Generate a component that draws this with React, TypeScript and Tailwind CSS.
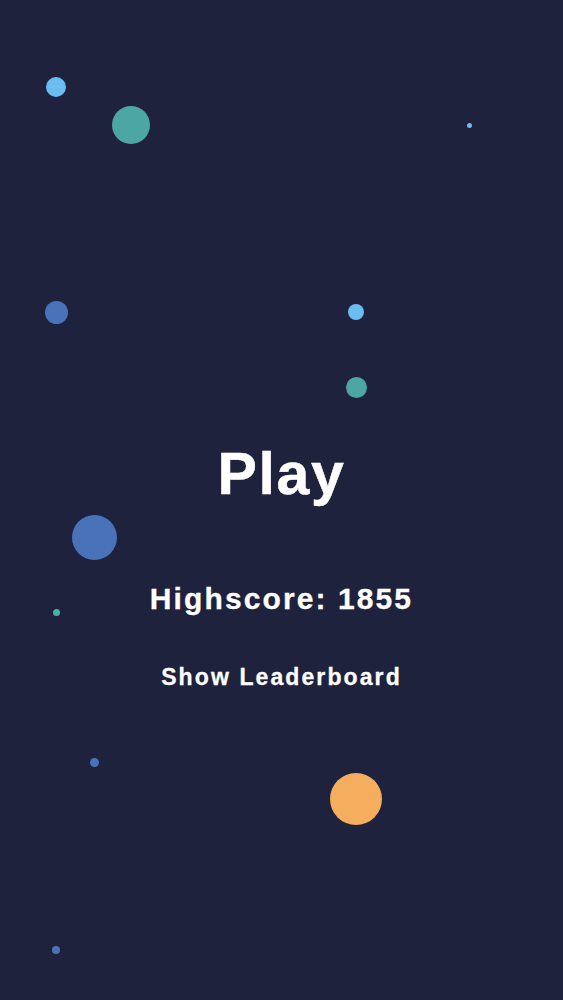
const BUBBLES = [
  { x: 56, y: 87, d: 20, color: "bg-[#6bbcf0]" },
  { x: 131, y: 125, d: 38, color: "bg-[#4ba6a4]" },
  { x: 469, y: 125, d: 5, color: "bg-[#6bbcf0]" },
  { x: 56, y: 312, d: 23, color: "bg-[#4a72b8]" },
  { x: 356, y: 312, d: 16, color: "bg-[#6bbcf0]" },
  { x: 356, y: 387, d: 21, color: "bg-[#4ba6a4]" },
  { x: 94, y: 537, d: 45, color: "bg-[#4a72b8]" },
  { x: 56, y: 612, d: 7, color: "bg-[#4ab3a0]" },
  { x: 94, y: 762, d: 9, color: "bg-[#4a72b8]" },
  { x: 356, y: 799, d: 52, color: "bg-[#f5ae5e]" },
  { x: 56, y: 950, d: 8, color: "bg-[#4a72b8]" },
];

export default function App() {
  return (
    <div className="relative h-[1000px] w-full overflow-hidden bg-[#1f223d] font-['Liberation_Sans',Arial,sans-serif] text-white">
      {BUBBLES.map((b, i) => (
        <span
          key={i}
          className={`absolute rounded-full ${b.color}`}
          style={{ left: b.x - b.d / 2, top: b.y - b.d / 2, width: b.d, height: b.d }}
        />
      ))}
      <div className="relative flex flex-col items-center pt-[445px]">
        <button type="button" className="text-[59px] font-bold leading-none tracking-[1.6px] [-webkit-text-stroke:0.5px_white]">
          Play
        </button>
        <p className="mt-[80px] text-[30px] font-bold leading-none tracking-[2.1px] [-webkit-text-stroke:0.3px_white]">
          Highscore: 1855
        </p>
        <button type="button" className="mt-[52px] text-[23px] font-bold leading-none tracking-[2.1px] [-webkit-text-stroke:0.3px_white]">
          Show Leaderboard
        </button>
      </div>
    </div>
  );
}
